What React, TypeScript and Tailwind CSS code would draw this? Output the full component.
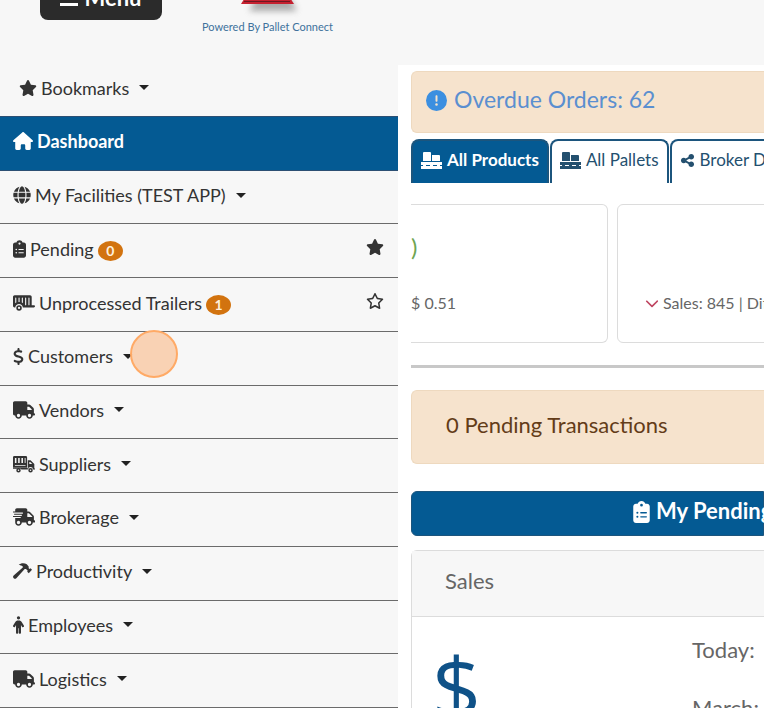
import * as React from "react";
import clsx from "clsx";
import { FaGlobe, FaShippingFast } from "react-icons/fa";
import {
  FaChevronDown,
  FaCircleExclamation,
  FaClipboardList,
  FaDollarSign,
  FaHouse,
  FaPerson,
  FaRegStar,
  FaShareNodes,
  FaStar,
  FaTrailer,
  FaTruck,
} from "react-icons/fa6";

type NavItem = {
  label: string;
  icon: React.ReactNode;
  caret?: boolean;
  active?: boolean;
  badge?: number;
  star?: "on" | "off";
  pointer?: boolean;
};

function SlatTruck() {
  return (
    <svg viewBox="0 0 640 512" className="h-[18px] w-[22px]" fill="currentColor" aria-hidden="true">
      <path
        fillRule="evenodd"
        d="M40 20h330a40 40 0 0 1 40 40v305H0V60a40 40 0 0 1 40-40zm15 60v150h45V80zm95 0v150h45V80zm95 0v150h45V80zm95 0v150h25V80zM55 285v25h310v-25z"
      />
      <path fillRule="evenodd" d="M430 150h80l110 105v130h20v30h-60a70 70 0 0 0-140 0h-10zm45 45v60h85l-60-60z" />
      <path
        fillRule="evenodd"
        d="M0 375h430v40H240a70 70 0 0 0-10-20h-25a65 65 0 0 0-90 0H0zM160 370a65 65 0 1 1 0 130 65 65 0 0 1 0-130zm0 43a22 22 0 1 0 0 44 22 22 0 0 0 0-44zM510 370a65 65 0 1 1 0 130 65 65 0 0 1 0-130zm0 43a22 22 0 1 0 0 44 22 22 0 0 0 0-44z"
      />
    </svg>
  );
}

function Hammer() {
  return (
    <svg viewBox="0 0 20 18" className="h-[18px] w-[19px]" fill="currentColor" aria-hidden="true">
      <path d="M6 2.5C8 .6 12 .2 14.500 2l2 2.200v1.800l1 .8 1-.6 1.500 1.600-3.400 3.600-1.600-1.600.4-1.200-1.800-1.700-1.300.1L3.500 16.500a1.700 1.700 0 0 1-2.800-2.700L10.300 5.200V4.300C9 3.200 7.500 3 6 2.500z" />
    </svg>
  );
}

function PalletBoxes() {
  return (
    <svg viewBox="0 0 21 17" className="h-[17px] w-[21px]" fill="currentColor" aria-hidden="true">
      <path d="M3 0h6a1 1 0 0 1 1 1v8H2V1a1 1 0 0 1 1-1zM11 3h7a1 1 0 0 1 1 1v5h-8z" />
      <path d="M0 10h21v3h-2v1h2v3H0v-3h2v-1H0zm5 3v1h4v-1zm7 0v1h4v-1z" fillRule="evenodd" />
    </svg>
  );
}

const NAV: NavItem[] = [
  { label: "Dashboard", icon: <FaHouse className="h-[18px] w-5" />, active: true },
  { label: "My Facilities (TEST APP)", icon: <FaGlobe className="size-[18px]" />, caret: true },
  { label: "Pending", icon: <FaClipboardList className="h-[18px] w-[13px]" />, badge: 0, star: "on" },
  { label: "Unprocessed Trailers", icon: <FaTrailer className="h-[18px] w-[22px]" />, badge: 1, star: "off" },
  { label: "Customers", icon: <FaDollarSign className="h-[17px] w-[11px]" />, caret: true, pointer: true },
  { label: "Vendors", icon: <FaTruck className="h-[18px] w-[22px]" />, caret: true },
  { label: "Suppliers", icon: <SlatTruck />, caret: true },
  { label: "Brokerage", icon: <FaShippingFast className="h-[18px] w-[22px]" />, caret: true },
  { label: "Productivity", icon: <Hammer />, caret: true },
  { label: "Employees", icon: <FaPerson className="h-[18px] w-[11px]" />, caret: true },
  { label: "Logistics", icon: <FaTruck className="h-[18px] w-[22px]" />, caret: true },
];

function Caret() {
  return <span className="ml-1.5 border-x-5 border-t-5 border-x-transparent border-t-[#222]" />;
}

function NavRow({ item }: { item: NavItem }) {
  return (
    <li
      className={clsx(
        "relative flex items-center justify-between border-b pr-3.5 pb-1 pl-[13px]",
        item.active ? "border-[#2c4f73] bg-[#045a93] text-white" : "border-[#6b6b6b]",
      )}
    >
      <a href="#" className={clsx("flex items-center gap-1", item.active && "font-bold")}>
        {item.icon}
        <span>{item.label}</span>
        {item.caret && <Caret />}
        {item.badge !== undefined && (
          <span className="mt-1 flex h-5 w-[25px] items-center justify-center rounded-[50%] bg-[#d2730f] text-sm font-bold text-[#fff0dc]">
            {item.badge}
          </span>
        )}
      </a>
      {item.star && (
        <button type="button" aria-label={`Bookmark ${item.label}`} className="mb-1">
          {item.star === "on" ? <FaStar className="size-[18px]" /> : <FaRegStar className="size-[18px]" />}
        </button>
      )}
      {item.pointer && (
        <span className="absolute top-[-2px] left-[130px] size-12 rounded-full border-2 border-[#ffaa66] bg-[#f9d0b0]/95" />
      )}
    </li>
  );
}

function Tab({ label, icon, active }: { label: string; icon: React.ReactNode; active?: boolean }) {
  return (
    <button
      type="button"
      role="tab"
      aria-selected={!!active}
      className={clsx(
        "flex h-11 shrink-0 items-center gap-[5px] rounded-t-lg border-2 border-b-0 border-[#1c557d] px-2 pb-1 text-[17px] whitespace-nowrap",
        active ? "bg-[#045a93] font-bold text-white" : "bg-white text-[#24506f]",
      )}
    >
      {icon}
      {label}
    </button>
  );
}

export default function App() {
  return (
    <div className="flex h-screen flex-col overflow-hidden bg-white font-['Lato',sans-serif] text-lg text-[#333]">
      <header className="flex h-[65px] shrink-0 items-start bg-[#f7f7f7] pl-10">
        <button
          type="button"
          className="-mt-8 flex h-[52px] w-[122px] items-end justify-center gap-1.5 rounded-lg bg-[#2b2b2b] pb-2 text-[22px] leading-7 font-bold text-white"
        >
          <svg viewBox="0 0 18 18" className="mb-1.5 size-[18px]" fill="currentColor" aria-hidden="true">
            <path d="M0 1h18v3H0zM0 8h18v3H0zM0 15h18v3H0z" />
          </svg>
          Menu
        </button>
        <a href="#" className="-mt-10 ml-10 flex flex-col items-center text-[11px] text-[#40729c]">
          <svg viewBox="0 0 72 58" className="h-[58px] w-[72px]" aria-hidden="true">
            <defs>
              <filter id="soft" x="-30%" y="-30%" width="160%" height="160%">
                <feGaussianBlur stdDeviation="3" />
              </filter>
            </defs>
            <path d="M42 8l24 43H18z" fill="#777" opacity=".6" filter="url(#soft)" />
            <path d="M36 2l27 42H10z" fill="#c5202f" />
            <path d="M13 41h46v1H13z" fill="#6e1821" />
          </svg>
          Powered By Pallet Connect
        </a>
      </header>

      <div className="flex min-h-0 flex-1">
        <nav className="flex w-[52.1%] flex-col bg-[#f7f7f7]">
          <a href="#" className="flex h-[52px] shrink-0 items-center gap-1 border-b border-[#2c4f73] pb-1.5 pl-[19px]">
            <FaStar className="size-[18px]" />
            <span>Bookmarks</span>
            <Caret />
          </a>
          <ul className="grid flex-1 auto-rows-fr">
            {NAV.map((item) => (
              <NavRow key={item.label} item={item} />
            ))}
          </ul>
        </nav>

        <main className="ml-[13px] flex min-w-0 flex-1 flex-col overflow-hidden pt-1.5">
          <div className="flex h-[62px] shrink-0 items-center gap-[7px] rounded-l-md border border-r-0 border-[#eed9bf] bg-[#f6e3cd] pb-1 pl-3.5 text-[23px] text-[#5b8fd0]">
            <FaCircleExclamation className="size-[21px] text-[#3c8fe0]" />
            <span>Overdue Orders: 62</span>
          </div>

          <div role="tablist" className="mt-1.5 flex shrink-0 gap-px">
            <Tab label="All Products" icon={<PalletBoxes />} active />
            <Tab label="All Pallets" icon={<PalletBoxes />} />
            <Tab label="Broker Deals" icon={<FaShareNodes className="size-[15px]" />} />
          </div>

          <div className="mt-[21px] flex h-[139px] shrink-0 gap-[9px] text-base text-[#666]">
            <section className="flex w-[197px] shrink-0 flex-col rounded-r-md border border-l-0 border-[#dcdcdc] pt-[26px]">
              <span className="text-2xl text-[#6fa552]">)</span>
              <span className="mt-7">$ 0.51</span>
            </section>
            <section className="w-[420px] shrink-0 rounded-md border border-[#dcdcdc] pt-[86px] pl-[27px]">
              <p className="flex items-center gap-1">
                <FaChevronDown className="size-3.5 text-[#bf4560]" />
                Sales: 845 | Diff: 12
              </p>
            </section>
          </div>

          <hr className="mt-[22px] shrink-0 border-t-3 border-[#c8c8c8]" />

          <div className="mt-[22px] flex h-[74px] shrink-0 items-center rounded-l-md border border-r-0 border-[#eed9bf] bg-[#f6e3cd] pb-1 pl-[34px] text-[22px] text-[#633c18]">
            0 Pending Transactions
          </div>

          <button
            type="button"
            className="mt-[27px] flex h-[45px] shrink-0 items-center gap-1.5 rounded-l-md border border-[#1c557d] bg-[#045a93] pb-1 pl-[221px] text-[22px] font-bold whitespace-nowrap text-white"
          >
            <FaClipboardList className="h-[22px] w-[17px] shrink-0" />
            My Pending Orders
          </button>

          <section className="mt-3.5 shrink-0 rounded-tl-md border-t border-l border-[#dcdcdc] text-[22px] text-[#666]">
            <h2 className="flex h-[66px] items-center border-b border-[#dcdcdc] bg-[#f7f7f7] pb-1 pl-[33px]">Sales</h2>
            <div className="flex">
              <span className="w-[280px] shrink-0 pt-5 pl-5 font-['Open_Sans',sans-serif] text-[86px] leading-[100px] font-medium text-[#0f5288]">
                $
              </span>
              <div className="space-y-6 pt-4 whitespace-nowrap">
                <p>Today:</p>
                <p>March:</p>
              </div>
            </div>
          </section>
        </main>
      </div>
    </div>
  );
}
